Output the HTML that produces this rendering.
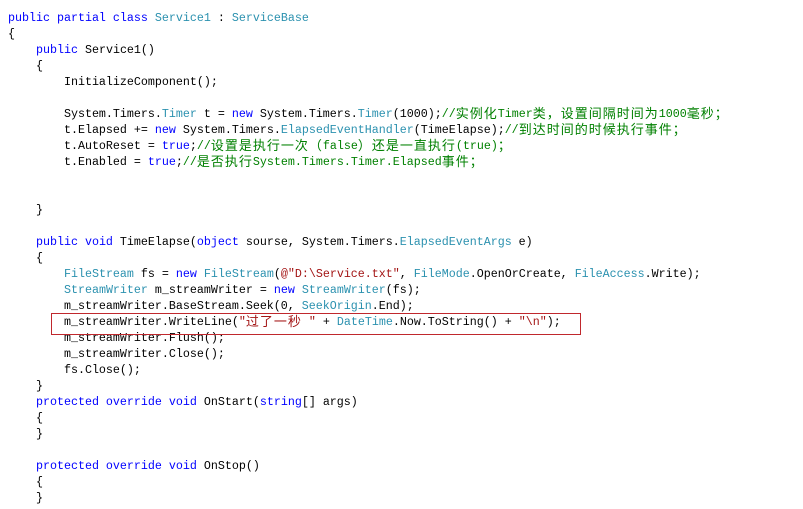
<!DOCTYPE html>
<html><head><meta charset="utf-8"><style>
body{margin:0;width:803px;height:509px;background:#fff;overflow:hidden;position:relative}
.l{position:absolute;left:8px;height:16px;line-height:16px;white-space:pre;font-family:"Liberation Mono","Noto Sans CJK SC",monospace;font-size:11.67px;color:#000}
.k{color:#0000ff}.t{color:#2b91af}.g{color:#008000}.s{color:#a31515}
.c{font-family:"Noto Sans CJK SC",sans-serif;font-size:13px;letter-spacing:1px;line-height:0;position:relative;top:1px}
.box{position:absolute;left:51px;top:313px;width:528px;height:20px;border:1px solid #c0282d}
</style></head><body>
<div class="l" style="top:10px"><span class="k">public partial class</span> <span class="t">Service1</span> : <span class="t">ServiceBase</span></div>
<div class="l" style="top:26px">{</div>
<div class="l" style="top:42px">    <span class="k">public</span> Service1()</div>
<div class="l" style="top:58px">    {</div>
<div class="l" style="top:74px">        InitializeComponent();</div>
<div class="l" style="top:106px">        System.Timers.<span class="t">Timer</span> t = <span class="k">new</span> System.Timers.<span class="t">Timer</span>(1000);<span class="g">//<span class="c">实例化</span>Timer<span class="c">类，设置间隔时间为</span>1000<span class="c">毫秒；</span></span></div>
<div class="l" style="top:122px">        t.Elapsed += <span class="k">new</span> System.Timers.<span class="t">ElapsedEventHandler</span>(TimeElapse);<span class="g">//<span class="c">到达时间的时候执行事件；</span></span></div>
<div class="l" style="top:138px">        t.AutoReset = <span class="k">true</span>;<span class="g">//<span class="c">设置是执行一次（</span>false<span class="c">）还是一直执行</span>(true)<span class="c">；</span></span></div>
<div class="l" style="top:154px">        t.Enabled = <span class="k">true</span>;<span class="g">//<span class="c">是否执行</span>System.Timers.Timer.Elapsed<span class="c">事件；</span></span></div>
<div class="l" style="top:202px">    }</div>
<div class="l" style="top:234px">    <span class="k">public void</span> TimeElapse(<span class="k">object</span> sourse, System.Timers.<span class="t">ElapsedEventArgs</span> e)</div>
<div class="l" style="top:250px">    {</div>
<div class="l" style="top:266px">        <span class="t">FileStream</span> fs = <span class="k">new</span> <span class="t">FileStream</span>(<span class="s">@"D:\Service.txt"</span>, <span class="t">FileMode</span>.OpenOrCreate, <span class="t">FileAccess</span>.Write);</div>
<div class="l" style="top:282px">        <span class="t">StreamWriter</span> m_streamWriter = <span class="k">new</span> <span class="t">StreamWriter</span>(fs);</div>
<div class="l" style="top:298px">        m_streamWriter.BaseStream.Seek(0, <span class="t">SeekOrigin</span>.End);</div>
<div class="l" style="top:314px">        m_streamWriter.WriteLine(<span class="s">"<span class="c">过了一秒</span> "</span> + <span class="t">DateTime</span>.Now.ToString() + <span class="s">"\n"</span>);</div>
<div class="l" style="top:330px">        m_streamWriter.Flush();</div>
<div class="l" style="top:346px">        m_streamWriter.Close();</div>
<div class="l" style="top:362px">        fs.Close();</div>
<div class="l" style="top:378px">    }</div>
<div class="l" style="top:394px">    <span class="k">protected override void</span> OnStart(<span class="k">string</span>[] args)</div>
<div class="l" style="top:410px">    {</div>
<div class="l" style="top:426px">    }</div>
<div class="l" style="top:458px">    <span class="k">protected override void</span> OnStop()</div>
<div class="l" style="top:474px">    {</div>
<div class="l" style="top:490px">    }</div>
<div class="box"></div>
</body></html>
